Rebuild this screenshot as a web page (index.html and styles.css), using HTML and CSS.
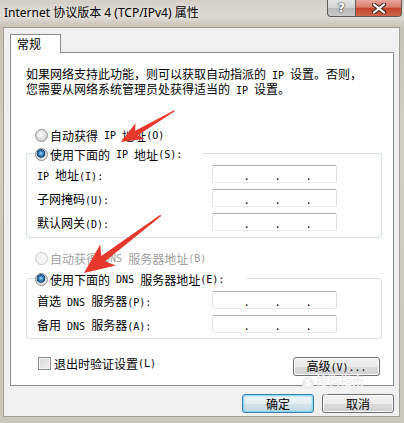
FILE: index.html
```html
<!DOCTYPE html>
<html lang="zh-CN">
<head>
    <meta charset="UTF-8">
    <meta name="viewport" content="width=device-width, initial-scale=1.0">
    <title>Internet 协议版本 4 (TCP/IPv4) 属性</title>
    <link rel="stylesheet" href="styles.css">
</head>
<body>
    <div class="window">
        <div class="titlebar">
            <span class="title">Internet 协议版本 4 (TCP/IPv4) 属性</span>
            <div class="caption-btns">
                <div class="cap help">?</div>
                <div class="cap close">
                    <svg width="14" height="11" viewBox="0 0 14 11">
                        <path d="M2 1.5 L12 9.5 M12 1.5 L2 9.5" stroke="#4a2a24" stroke-width="4.2" stroke-linecap="round"/>
                        <path d="M2 1.5 L12 9.5 M12 1.5 L2 9.5" stroke="#fff" stroke-width="2.2" stroke-linecap="round"/>
                    </svg>
                </div>
            </div>
        </div>

        <div class="client">
            <div class="tabs">
                <div class="tab">常规</div>
            </div>
            <div class="panel">
                <p class="intro">如果网络支持此功能，则可以获取自动指派的<span class="m"> IP </span>设置。否则，<br>您需要从网络系统管理员处获得适当的<span class="m"> IP </span>设置。</p>

                <label class="opt first"><span class="radio"></span>自动获得<span class="m"> IP </span>地址<span class="m">(O)</span></label>

                <div class="group">
                    <label class="opt head head-ip"><span class="radio on"></span>使用下面的<span class="m"> IP </span>地址<span class="m">(S):</span></label>
                    <div class="row first-row">
                        <span class="lbl"><span class="m">IP </span>地址<span class="m">(I):</span></span>
                        <span class="ip"><i>.</i><i>.</i><i>.</i></span>
                    </div>
                    <div class="row">
                        <span class="lbl">子网掩码<span class="m">(U):</span></span>
                        <span class="ip"><i>.</i><i>.</i><i>.</i></span>
                    </div>
                    <div class="row">
                        <span class="lbl">默认网关<span class="m">(D):</span></span>
                        <span class="ip"><i>.</i><i>.</i><i>.</i></span>
                    </div>
                </div>

                <label class="opt disabled dns-auto"><span class="radio off"></span>自动获得<span class="m"> DNS </span>服务器地址<span class="m">(B)</span></label>

                <div class="group group-dns">
                    <label class="opt head head-dns"><span class="radio on"></span>使用下面的<span class="m"> DNS </span>服务器地址<span class="m">(E):</span></label>
                    <div class="row first-row">
                        <span class="lbl">首选<span class="m"> DNS </span>服务器<span class="m">(P):</span></span>
                        <span class="ip"><i>.</i><i>.</i><i>.</i></span>
                    </div>
                    <div class="row">
                        <span class="lbl">备用<span class="m"> DNS </span>服务器<span class="m">(A):</span></span>
                        <span class="ip"><i>.</i><i>.</i><i>.</i></span>
                    </div>
                </div>

                <div class="check-row">
                    <label class="check"><span class="box"></span>退出时验证设置<span class="m">(L)</span></label>
                    <button class="btn btn-adv">高级<span class="m">(V)...</span></button>
                </div>
            </div>

            <div class="footer">
                <button class="btn default">确定</button>
                <button class="btn">取消</button>
            </div>
        </div>

        <!-- watermark + the red hint arrows drawn over the dialog -->
        <div class="watermark"><b>S</b>搜狗指南</div>
        <div class="watermark-url">zhinan.sogou.com</div>
        <svg class="arrows" width="404" height="423" viewBox="0 0 404 423">
            <g transform="translate(121 142) rotate(149.7)" fill="#e8372d">
                <polygon points="0,0 -22,-9 -18,-2.6 -62,-0.6 -62,0.6 -18,2.6 -22,9"/>
            </g>
            <g transform="translate(84 273) rotate(143.1)" fill="#e8372d">
                <polygon points="0,0 -30,-13 -24,-3.2 -96,-0.7 -96,0.7 -24,3.2 -30,13"/>
            </g>
        </svg>
    </div>
</body>
</html>
```

FILE: styles.css
```css
body {
    margin: 0;
    width: 404px;
    height: 423px;
    overflow: hidden;
    font-family: "Noto Sans CJK SC", sans-serif;
    font-size: 12px;
    color: #000;
}
.window {
    position: relative;
    height: 423px;
    background: linear-gradient(180deg, #d3cfc6 0%, #dedad2 4%, #c7c1b5 6.5%, #d2cdc3 30%, #cbc6bb 100%);
}
.titlebar {
    height: 27px;
    display: flex;
    justify-content: space-between;
    align-items: flex-start;
}
.title {
    font-family: "Noto Sans", "Noto Sans CJK SC", sans-serif;
    font-size: 12px;
    line-height: 16px;
    margin: 5px 0 0 4px;
    text-shadow: 0 0 6px rgba(255, 255, 255, 0.9);
}
.caption-btns {
    display: flex;
    margin-right: 2px;
}
.cap {
    box-sizing: border-box;
    height: 17px;
    border: 1px solid #5e5c58;
    border-top: none;
    display: flex;
    align-items: center;
    justify-content: center;
}
.help {
    width: 28px;
    border-right: none;
    border-radius: 0 0 0 4px;
    background: linear-gradient(180deg, #e4e4e4 0%, #d2d2d2 50%, #b9b9b9 52%, #c9c9c9 100%);
    color: #fff;
    font-family: "DejaVu Sans", sans-serif;
    font-weight: bold;
    font-size: 12px;
    text-shadow: 0 0 2px #333, 0 0 1px #333;
}
.close {
    width: 47px;
    border-radius: 0 0 4px 0;
    background: linear-gradient(180deg, #e8a79b 0%, #d77c6a 45%, #c2442d 52%, #d0644a 100%);
}
.client {
    box-sizing: border-box;
    height: 390px;
    margin: 0 4px 0 3px;
    padding: 6px 5px 0 6px;
    background: #f0f0f0;
    border: 1px solid #a29e95;
}
.tabs {
    display: flex;
    height: 18px;
}
.tab {
    position: relative;
    z-index: 1;
    box-sizing: border-box;
    width: 51px;
    height: 19px;
    padding-left: 6px;
    line-height: 17px;
    background: #fff;
    border: 1px solid #898c95;
    border-bottom: none;
}
.panel {
    box-sizing: border-box;
    height: 334px;
    padding: 14px 11px 0 15px;
    background: #fff;
    border: 1px solid #898c95;
}
.m {
    font-family: "DejaVu Sans Mono", monospace;
    font-size: 10px;
    white-space: pre;
}
.intro {
    margin: 0;
    line-height: 13px;
    white-space: nowrap;
}
.opt {
    display: flex;
    align-items: center;
    height: 16px;
    margin-left: 9px;
    white-space: nowrap;
}
.opt.first {
    margin-top: 30px;
}
.radio {
    box-sizing: border-box;
    width: 13px;
    height: 13px;
    margin-right: 2px;
    border-radius: 50%;
    border: 1px solid #8e8f8f;
    background: radial-gradient(circle at 45% 40%, #ffffff 0, #f0f0f0 2px, #d4d4d4 6px);
}
.radio.on {
    background: radial-gradient(circle at 45% 40%, #9fdcfa 0, #3d8fcc 2px, #15436e 4px, #c9c9c9 4.5px, #e6e6e6 6px);
}
.radio.off {
    border-color: #c8c8c8;
    background: #f4f4f4;
}
.disabled {
    color: #a0a0a0;
}
.dns-auto {
    margin-top: 12px;
}
.group {
    margin-top: 10px;
    padding-bottom: 6px;
    border: 1px solid #d5dfe5;
    border-radius: 3px;
}
.group-dns {
    margin-top: 12px;
    padding-bottom: 5px;
}
.head {
    margin: -8px 0 0 8px;
    background: #fff;
}
.head-ip {
    width: 168px;
}
.head-dns {
    width: 212px;
}
.row {
    display: flex;
    align-items: center;
    height: 18px;
    margin-top: 6px;
    padding-left: 10px;
}
.row.first-row {
    margin-top: 3px;
}
.group-dns .row.first-row {
    margin-top: 4px;
}
.lbl {
    width: 175px;
    white-space: nowrap;
}
.ip {
    box-sizing: border-box;
    display: flex;
    gap: 28px;
    width: 125px;
    height: 18px;
    padding-left: 32px;
    border: 1px solid;
    border-color: #abadb3 #dbdfe6 #e3e9ef #e2e3ea;
    border-radius: 2px;
}
.ip i {
    width: 3px;
    font-style: normal;
    line-height: 17px;
}
.check-row {
    display: flex;
    justify-content: space-between;
    align-items: flex-start;
    margin-top: 18px;
}
.check {
    display: flex;
    align-items: center;
    height: 13px;
    margin-left: 12px;
}
.box {
    box-sizing: border-box;
    width: 13px;
    height: 13px;
    margin-right: 3px;
    border: 1px solid #8e8f8f;
    background: linear-gradient(135deg, #d3d3d3, #f3f3f3);
    box-shadow: inset 0 0 0 1px #f4f4f4;
}
.btn {
    box-sizing: border-box;
    width: 72px;
    height: 19px;
    padding: 0;
    font-family: "Noto Sans CJK SC", sans-serif;
    font-size: 12px;
    line-height: 16px;
    color: #000;
    border: 1px solid #707070;
    border-radius: 3px;
    background: linear-gradient(180deg, #f2f2f2 0%, #ebebeb 50%, #dddddd 50%, #cfcfcf 100%);
    box-shadow: inset 0 0 0 1px #fbfbfb;
}
.btn-adv {
    width: 87px;
    margin-right: 2px;
}
.btn.default {
    border-color: #3c7fb1;
    background: linear-gradient(180deg, #eef6fa 0%, #e3eef4 50%, #d5e3ea 50%, #c8dae3 100%);
    box-shadow: inset 0 0 2px 1px #6fd3f7;
}
.footer {
    display: flex;
    justify-content: flex-end;
    gap: 8px;
    margin-top: 8px;
}
.watermark {
    position: absolute;
    left: 302px;
    top: 375px;
    font-size: 12px;
    line-height: 12px;
    color: #ececec;
    text-shadow: 0 0 1px #fff;
}
.watermark b {
    display: inline-block;
    width: 12px;
    height: 12px;
    margin-right: 2px;
    border-radius: 50%;
    background: #ececec;
    color: #fff;
    font-size: 9px;
    line-height: 12px;
    text-align: center;
}
.watermark-url {
    position: absolute;
    left: 294px;
    top: 387px;
    font-family: "Liberation Sans", sans-serif;
    font-size: 7px;
    line-height: 7px;
    color: #fafafa;
}
.arrows {
    position: absolute;
    left: 0;
    top: 0;
    pointer-events: none;
}
```
